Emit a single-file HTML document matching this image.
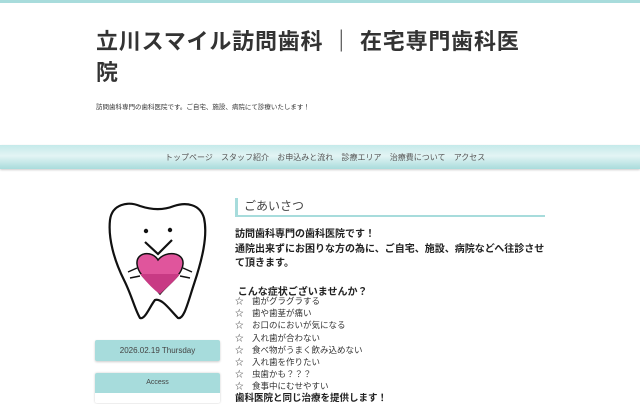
<!DOCTYPE html>
<html><head><meta charset="utf-8"><style>
*{margin:0;padding:0;box-sizing:border-box}
body{width:640px;height:400px;overflow:hidden;background:#fff;font-family:"Liberation Sans","Noto Sans CJK JP",sans-serif;color:#333;position:relative}
.top{position:absolute;left:0;top:0;width:640px;height:3px;background:#a8dcdc}
h1{position:absolute;left:96px;top:26px;width:480px;font-size:22px;line-height:31px;font-weight:bold;color:#333;letter-spacing:0.8px}
.sub{position:absolute;left:96px;top:101px;font-size:6.5px;color:#333}
.nav{position:absolute;left:0;top:145px;width:640px;height:24px;background:linear-gradient(#c5eaea,#e3f4f4 45%,#a9dcdc);box-shadow:0 1px 2px #ccc}
.nav div{position:absolute;left:165px;top:7px;font-size:8px;color:#555;word-spacing:6px;white-space:nowrap}
.date{position:absolute;left:95px;top:340px;width:125px;height:21px;background:#a7dcdc;border-radius:2px;font-size:8px;text-align:center;line-height:21px;color:#444;box-shadow:0 1px 2px #ccc}
.acc{position:absolute;left:95px;top:373px;width:125px;height:30px;background:#fff;border-radius:2px;box-shadow:0 0 2px #ccc;overflow:hidden}
.acc div{height:20px;background:#a7dcdc;font-size:7px;line-height:20px;text-align:center;color:#444}
.h2{position:absolute;left:235px;top:198px;width:310px;height:19px;border-left:3px solid #a7dcdc;border-bottom:2px solid #a7dcdc;font-size:12px;padding-left:6px;line-height:17px;color:#444}
.body{position:absolute;left:235px;top:228px;width:320px;font-size:10px;font-weight:bold;line-height:14.5px;color:#222}
.list{position:absolute;left:235px;top:295px;font-size:8.5px;line-height:12.2px;color:#333}
.last{position:absolute;left:235px;top:390px;font-size:9.5px;font-weight:bold;color:#222}
</style></head><body>
<div class="top"></div>
<h1>立川スマイル訪問歯科 ｜ 在宅専門歯科医<br>院</h1>
<div class="sub">訪問歯科専門の歯科医院です。ご自宅、施設、病院にて診療いたします！</div>
<div class="nav"><div>トップページ スタッフ紹介 お申込みと流れ 診療エリア 治療費について アクセス</div></div>
<svg style="position:absolute;left:100px;top:198px" width="115" height="128" viewBox="0 0 115 128">
<path d="M40 8 C28 3 12 6 10 22 C8 40 14 62 24 82 C32 98 35 112 40 120 C45 122 50 108 55 102 C62 100 70 112 78 120 C84 122 88 104 94 86 C102 62 108 38 104 20 C100 6 86 4 74 8 C64 12 52 12 40 8Z" fill="#fff" stroke="#111" stroke-width="2.2"/>
<circle cx="46" cy="33" r="2.2" fill="#111"/><circle cx="70" cy="32" r="2.2" fill="#111"/>
<path d="M45 44 L58 56 L72 42" fill="none" stroke="#111" stroke-width="2.2"/>
<path d="M58 62 C52 52 36 54 37 66 C38 78 52 86 60 96 C68 86 82 78 83 66 C84 54 66 52 58 62Z" fill="#e0559c" stroke="#111" stroke-width="1.5"/>
<path d="M40 76 C48 86 54 92 60 96 C66 90 74 84 80 76" fill="#c83a84"/>
<path d="M37 70 L28 74 M40 78 L30 80 M83 70 L92 74 M80 78 L90 80" stroke="#111" stroke-width="1.5"/>
</svg>
<div class="date">2026.02.19 Thursday</div>
<div class="acc"><div>Access</div></div>
<div class="h2">ごあいさつ</div>
<div class="body">訪問歯科専門の歯科医院です！<br>通院出来ずにお困りな方の為に、ご自宅、施設、病院などへ往診させ<br>て頂きます。<br><br>&nbsp;こんな症状ございませんか？</div>
<div class="list">☆　歯がグラグラする<br>☆　歯や歯茎が痛い<br>☆　お口のにおいが気になる<br>☆　入れ歯が合わない<br>☆　食べ物がうまく飲み込めない<br>☆　入れ歯を作りたい<br>☆　虫歯かも？？？<br>☆　食事中にむせやすい</div>
<div class="last">歯科医院と同じ治療を提供します！</div>
</body></html>
